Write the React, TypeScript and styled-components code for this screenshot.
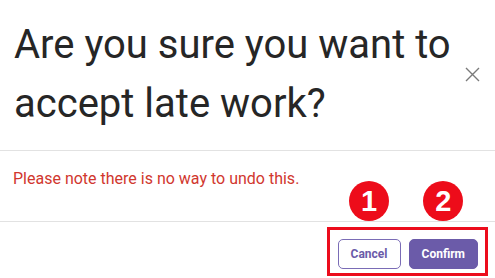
import React from "react";
import styled, { createGlobalStyle } from "styled-components";

const GlobalStyle = createGlobalStyle`
  html, body {
    margin: 0;
    padding: 0;
    background: #fff;
  }
  body {
    font-family: Roboto, "Liberation Sans", sans-serif;
    overflow: hidden;
  }
`;

const Dialog = styled.div`
  width: 495px;
  height: 278px;
  display: flex;
  flex-direction: column;
  background: #fff;
  overflow: hidden;
`;

const Header = styled.div`
  display: flex;
  align-items: center;
  justify-content: space-between;
  padding: 15px 14px 17px 14px;
  border-bottom: 1px solid #e2e2e2;
`;

const Title = styled.h1`
  margin: 0;
  font-size: 40px;
  font-weight: 400;
  line-height: 59px;
  color: #262626;
  max-width: 450px;
`;

const CloseButton = styled.button`
  border: none;
  background: none;
  padding: 0;
  margin-right: 1px;
  width: 18px;
  height: 18px;
  display: flex;
  align-items: center;
  justify-content: center;
  color: #7a7a7a;
  cursor: pointer;
`;

const Body = styled.div`
  height: 71px;
  box-sizing: border-box;
  padding: 18px 14px 0 13px;
  border-bottom: 1px solid #e2e2e2;
`;

const Warning = styled.p`
  margin: 0;
  font-size: 16px;
  line-height: 20px;
  color: #d1372e;
`;

const Footer = styled.div`
  display: flex;
  justify-content: flex-end;
  padding: 5px 7px 0 0;
`;

const Highlight = styled.div`
  display: flex;
  gap: 8px;
  padding: 9px 7px 4px 8px;
  border: 3px solid #ec0c1c;
`;

const Slot = styled.div`
  position: relative;
`;

const Marker = styled.span`
  position: absolute;
  top: -58px;
  left: 50%;
  transform: translateX(-50%);
  width: 40px;
  height: 40px;
  border-radius: 50%;
  background: #ed0c1a;
  color: #fff;
  display: flex;
  align-items: center;
  justify-content: center;
  font-family: "Liberation Sans", Arial, sans-serif;
  font-size: 29px;
  font-weight: 700;
`;

const Button = styled.button<{ $primary?: boolean }>`
  box-sizing: border-box;
  height: 30px;
  padding: 0 12px;
  border-radius: 5px;
  font-family: Roboto, "Liberation Sans", sans-serif;
  font-size: 12px;
  font-weight: 700;
  cursor: pointer;
  border: 1px solid ${(p) => (p.$primary ? "#6b5ba9" : "#7a6cb6")};
  background: ${(p) => (p.$primary ? "#6b5ba9" : "#fff")};
  color: ${(p) => (p.$primary ? "#fff" : "#6b5ba9")};
  min-width: ${(p) => (p.$primary ? "68px" : "63px")};
`;

const App: React.FC = () => {
  return (
    <Dialog>
      <GlobalStyle />
      <Header>
        <Title>Are you sure you want to accept late work?</Title>
        <CloseButton aria-label="Close">
          <svg width="15" height="15" viewBox="0 0 15 15">
            <path d="M1 1 L14 14 M14 1 L1 14" stroke="currentColor" strokeWidth="1.4" />
          </svg>
        </CloseButton>
      </Header>
      <Body>
        <Warning>Please note there is no way to undo this.</Warning>
      </Body>
      <Footer>
        <Highlight>
          <Slot>
            <Marker>1</Marker>
            <Button>Cancel</Button>
          </Slot>
          <Slot>
            <Marker>2</Marker>
            <Button $primary>Confirm</Button>
          </Slot>
        </Highlight>
      </Footer>
    </Dialog>
  );
};

export default App;
